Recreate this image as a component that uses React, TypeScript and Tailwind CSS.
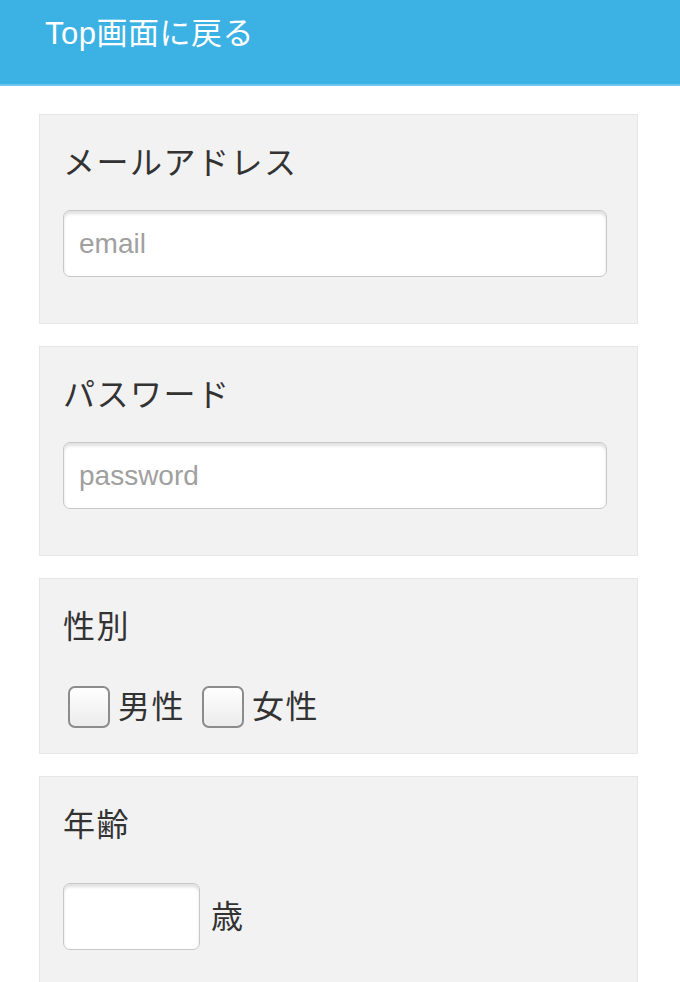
import React from 'react';

const font = { fontFamily: '"Liberation Sans", "Noto Sans CJK JP", sans-serif' };

const Card = ({ children, className = '' }: { children: React.ReactNode; className?: string }) => (
    <div className={`ml-[39px] w-[599px] bg-[#f2f2f2] border border-[#e6e6e6] px-[23px] pt-[24px] ${className}`}>
        {children}
    </div>
);

const Label = ({ children }: { children: React.ReactNode }) => (
    <div className="text-[32px] leading-[48px] text-[#333] tracking-[1.5px]">{children}</div>
);

const TextInput = ({ placeholder, className = '' }: { placeholder?: string; className?: string }) => (
    <input
        type="text"
        placeholder={placeholder}
        className={`block h-[67px] bg-white border border-[#c8c8c8] rounded-[7px] shadow-[inset_0_3px_3px_rgba(0,0,0,0.12)] px-[15px] text-[28px] text-[#333] placeholder:text-[#a0a0a0] outline-none ${className}`}
    />
);

const Check = ({ label }: { label: string }) => (
    <label className="flex items-center gap-[8px]">
        <span className="block w-[42px] h-[42px] rounded-[7px] border-2 border-[#8c8c8c] bg-gradient-to-b from-white to-[#ececec]" />
        <span className="text-[32px] leading-[48px] text-[#333] tracking-[1.5px]">{label}</span>
    </label>
);

export default function App() {
    return (
        <div className="w-[680px] h-[982px] bg-white overflow-hidden" style={font}>
            <div className="h-[86px] bg-[#3cb1e4] border-b-2 border-[#6cc6ee] flex items-start pl-[45px] pt-[12px]">
                <span className="text-white text-[31px] leading-[44px] tracking-[0.5px]">Top画面に戻る</span>
            </div>

            <div className="flex flex-col gap-[22px] pt-[28px]">
                <Card className="pb-[46px]">
                    <Label>メールアドレス</Label>
                    <TextInput placeholder="email" className="mt-[23px] w-[544px]" />
                </Card>

                <Card className="pb-[46px]">
                    <Label>パスワード</Label>
                    <TextInput placeholder="password" className="mt-[23px] w-[544px]" />
                </Card>

                <Card className="pb-[22px]">
                    <Label>性別</Label>
                    <div className="mt-[32px] flex items-center gap-[17px] pl-[5px]">
                        <Check label="男性" />
                        <Check label="女性" />
                    </div>
                </Card>

                <Card className="pb-[40px]">
                    <Label>年齢</Label>
                    <div className="mt-[34px] flex items-center gap-[11px]">
                        <TextInput className="w-[137px]" />
                        <span className="text-[32px] leading-[48px] text-[#333]">歳</span>
                    </div>
                </Card>
            </div>
        </div>
    );
}
